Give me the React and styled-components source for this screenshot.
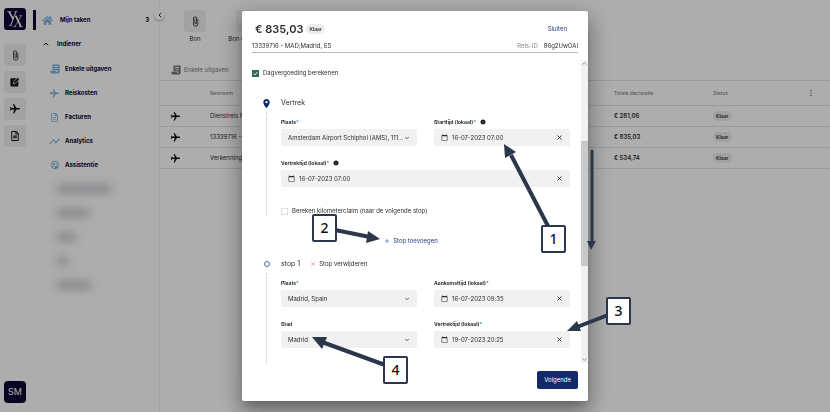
import React from 'react';
import styled, { createGlobalStyle } from 'styled-components';
import { FaHome, FaRegFileAlt } from 'react-icons/fa';
import {
  MdAttachFile,
  MdCalendarToday,
  MdFlight,
  MdInfo,
  MdLocationOn,
  MdMoreVert,
  MdOutlineSupervisedUserCircle,
  MdTimeline,
} from 'react-icons/md';
import { ChevronDown, ChevronLeft, ChevronUp, Plus, X } from 'lucide-react';

const GlobalStyle = createGlobalStyle`
  * { box-sizing: border-box; }
  body {
    margin: 0;
    background: #fff;
    color: #2c2c2c;
    font-family: Inter, 'Liberation Sans', sans-serif;
    font-size: 6px;
    line-height: 10px;
  }
  button, input, select { font: inherit; color: inherit; }
  button { padding: 0; border: 0; background: none; cursor: pointer; }
  a { color: inherit; text-decoration: none; }
  svg { display: block; flex: none; }
`;

const Page = styled.div`
  display: flex;
  min-height: 100vh;
`;

// --- Left rail ---

const Rail = styled.nav`
  display: flex;
  flex-direction: column;
  align-items: center;
  gap: 5px;
  width: 33px;
  padding: 8px 7px 9px 4px;
`;

const Logo = styled.a`
  margin-bottom: 9px;
`;

const Tile = styled.button`
  display: flex;
  align-items: center;
  justify-content: center;
  width: 22px;
  height: 22px;
  border-radius: 4px;
  background: #efefef;
  color: #111;
`;

const Avatar = styled(Tile)`
  margin-top: auto;
  background: #0b0736;
  color: #fff;
  font-size: 9px;
`;

// --- Sidebar ---

const Sidebar = styled.aside`
  position: relative;
  width: 127px;
  padding: 8px 0;
  border-right: 1px solid #f4f4f4;
`;

const NavLink = styled.a`
  display: flex;
  align-items: center;
  gap: ${({ $sub }) => ($sub ? '5px' : '7px')};
  height: 24px;
  padding: 0 10px 0 ${({ $sub }) => ($sub ? '16px' : '9px')};
  background: ${({ $active }) =>
    $active ? 'linear-gradient(#0b0736, #0b0736) left center / 3px 20px no-repeat' : 'none'};
  color: #0b0736;
  font-weight: 700;
`;

const NavIcon = styled.span`
  display: flex;
  justify-content: center;
  width: 11px;
  color: #7db4dc;
`;

const Count = styled.span`
  margin-left: auto;
`;

const SubNav = styled.div`
  padding-top: 1px;
`;

const Blurred = styled.div`
  display: flex;
  flex-direction: column;
  gap: 16px;
  padding: 8px 0 0 24px;
  filter: blur(5px);
`;

const BlurredLine = styled.span`
  width: ${({ $width }) => $width};
  height: 8px;
  background: #c2c2c8;
`;

const Collapse = styled.button`
  position: absolute;
  top: 9px;
  right: -6px;
  display: flex;
  align-items: center;
  justify-content: center;
  width: 11px;
  height: 11px;
  border-radius: 50%;
  background: #fff;
  box-shadow: 0 1px 2px rgba(0, 0, 0, 0.3);
`;

// --- Overview behind the dialog ---

const Main = styled.main`
  flex: 1;
  min-width: 0;
`;

const Toolbar = styled.div`
  display: flex;
  gap: 12px;
  padding: 10px 15px 0;
`;

const Action = styled.div`
  display: flex;
  flex-direction: column;
  align-items: center;
  gap: 2px;
  width: 40px;
  white-space: nowrap;
`;

const Tab = styled.button`
  display: flex;
  align-items: center;
  gap: 3px;
  margin: 21px 0 5px 11px;
  color: #777;
`;

const Table = styled.table`
  width: 100%;
  table-layout: fixed;
  border-collapse: collapse;
  border-top: 1px solid #e2e2e2;
  text-align: left;

  th, td {
    height: 21px;
    padding: 0;
    border-bottom: 1px solid #e2e2e2;
    white-space: nowrap;
  }
  th {
    height: 25px;
    color: #777;
    font-size: 5px;
    font-weight: 400;
  }
`;

const Amount = styled.span`
  font-weight: 600;
`;

const Plane = styled(MdFlight)`
  transform: rotate(90deg);
`;

const IconCell = styled.td`
  svg { margin-left: 10px; color: #111; }
`;

const Badge = styled.span`
  display: inline-block;
  padding: 0 3px;
  border-radius: 5px;
  background: #ededed;
  color: #333;
  font-size: 5px;
  font-weight: 600;
`;

// --- Dialog ---

const Overlay = styled.div`
  position: fixed;
  inset: 0;
  display: flex;
  justify-content: center;
  align-items: flex-start;
  padding: 11px 16px;
  background: rgba(0, 0, 0, 0.32);
`;

const Dialog = styled.section`
  position: relative;
  display: flex;
  flex-direction: column;
  width: 100%;
  max-width: 346px;
  max-height: calc(100vh - 22px);
  border-radius: 2px;
  background: #fff;
  box-shadow: 0 6px 8px -3px rgba(0, 0, 0, 0.2), 0 12px 20px 2px rgba(0, 0, 0, 0.2),
    0 5px 24px 4px rgba(0, 0, 0, 0.18);
`;

const DialogHeader = styled.header`
  margin: 0 10px;
  padding-top: 10px;
  border-bottom: 1px solid #b8b8b8;
`;

const HeaderRow = styled.div`
  display: flex;
  align-items: center;
  gap: 3px;
  padding: 0 11px 0 3px;
`;

const Total = styled.h1`
  margin: 0;
  font-size: 11px;
  font-weight: 600;
  line-height: 16px;
`;

const TextButton = styled.button`
  display: flex;
  align-items: center;
  gap: 3px;
  color: ${({ $plain }) => ($plain ? 'inherit' : '#1f3a7d')};
`;

const CloseLink = styled(TextButton)`
  margin-left: auto;
`;

const TripRow = styled.div`
  display: flex;
  gap: 6px;
  padding: 4px 0 1px;
`;

const TripId = styled.span`
  margin-left: auto;
  color: #888;
`;

const DialogBody = styled.div`
  display: flex;
  min-height: 0;
  margin-top: 7px;
`;

const Form = styled.form`
  flex: 1;
  min-width: 0;
  padding: 8px 11px 0 10px;
`;

const Check = styled.label`
  display: flex;
  align-items: center;
  gap: 4px;
  width: fit-content;

  input {
    appearance: none;
    width: 7px;
    height: 7px;
    margin: 0;
    border: 1px solid #ddd;
    background: #fff;
  }
  input:checked {
    border-color: #2f6b58;
    background: #2f6b58 url("data:image/svg+xml,%3Csvg xmlns='http://www.w3.org/2000/svg' viewBox='0 0 10 10'%3E%3Cpath d='M1 5l3 3 5-6' fill='none' stroke='white' stroke-width='1.6'/%3E%3C/svg%3E");
  }
`;

const LegOption = styled.div`
  padding-top: 4px;
`;

const Stop = styled.div`
  display: grid;
  grid-template-columns: 9px minmax(0, 1fr);
  column-gap: 10px;
  padding-left: 10px;
  margin-top: ${({ $first }) => ($first ? '20px' : '13px')};
`;

const Track = styled.div`
  display: flex;
  flex-direction: column;
  align-items: center;
  gap: 4px;
  color: #12296b;

  &::after {
    content: '';
    flex: 1;
    border-left: 1px dotted #ccc;
  }
`;

const Marker = styled.span`
  display: flex;
  align-items: center;
  justify-content: center;
  height: 10px;
`;

const Ring = styled.span`
  width: 6px;
  height: 6px;
  border: 1px solid #5468a0;
  border-radius: 50%;
`;

const StopHeader = styled.div`
  display: flex;
  align-items: center;
  gap: 10px;
`;

const StopTitle = styled.h2`
  margin: 0;
  font-size: 7px;
  font-weight: 400;
`;

const Fields = styled.div`
  display: grid;
  grid-template-columns: 1fr 1fr;
  gap: 12px 17px;
  padding: 9px 0 15px;
`;

const FieldBox = styled.div`
  grid-column: ${({ $wide }) => ($wide ? '1 / -1' : 'auto')};
  min-width: 0;
`;

const Label = styled.label`
  display: flex;
  align-items: center;
  margin-bottom: 2px;
  font-size: 5px;
  font-weight: 700;
  svg { margin-left: 4px; color: #111; }
`;

const Required = styled.span`
  color: #2a8ad4;
`;

const Control = styled.div`
  display: flex;
  align-items: center;
  gap: ${({ $tight }) => ($tight ? '0' : '4px')};
  height: 17px;
  padding: 0 7px;
  border-radius: 2px;
  background: #f1f1f1;

  input, select {
    flex: 1;
    min-width: 0;
    height: 100%;
    padding: 0;
    border: 0;
    outline: 0;
    background: none;
    appearance: none;
  }
`;

const AddRow = styled.div`
  display: flex;
  justify-content: center;
  padding: 20px 0 0;
`;

const Scrollbar = styled.div`
  display: flex;
  flex-direction: column;
  justify-content: space-between;
  align-items: center;
  width: 7px;
  background: #f1f1f1;
  color: #555;
`;

const Thumb = styled.div`
  width: 100%;
  height: 41%;
  margin-bottom: 16px;
  background: #c9c9c9;
`;

const DialogFooter = styled.footer`
  display: flex;
  justify-content: flex-end;
  padding: 8px 10px 12px;
`;

const Primary = styled.button`
  height: 18px;
  padding: 0 7px;
  border-radius: 2px;
  background: #12296b;
  color: #fff;
`;

// --- Numbered callouts that point into the dialog ---

const Arrows = styled.svg`
  position: absolute;
  top: 0;
  left: 0;
  width: 346px;
  height: 389px;
  overflow: visible;
  pointer-events: none;
  color: #2b384c;
`;

const Callout = styled.div`
  position: absolute;
  top: ${({ $top }) => $top}px;
  left: ${({ $left }) => $left}px;
  width: 25px;
  height: 28px;
  border: 2px solid #2b384c;
  border-radius: 2px;
  background: #fff;
  color: #111;
  font-family: 'Noto Sans', sans-serif;
  font-size: 14px;
  font-weight: 500;
  line-height: 24px;
  text-align: center;
`;

const LogoMark = () => (
  <svg width="22" height="22" viewBox="0 0 66 66" fill="none" stroke="#fff">
    <rect width="66" height="66" rx="10" fill="#0b0736" stroke="none" />
    <path d="M15 11L28 34" strokeWidth="5" />
    <path d="M36 11L20 52" strokeWidth="3" />
    <path d="M10 11h12M31 11h10M15 53h10" strokeWidth="2" />
    <path d="M35 23L51 56" strokeWidth="5" />
    <path d="M51 24L33 55" strokeWidth="2" />
    <path d="M46 23h9M45 56h11M28 56h9" strokeWidth="2" />
  </svg>
);

const ReceiptIcon = ({ size = 10 }) => (
  <svg width={size} height={size} viewBox="0 0 24 24" fill="currentColor">
    <path fillRule="evenodd" d="M6 1h17v18a4 4 0 0 1-4 4H5a4 4 0 0 1-4-4v-3h14v3a2 2 0 0 0 3 0v-4H6V1zm4 4v2h9V5h-9zm0 5v2h9v-2h-9z" />
  </svg>
);

const EditIcon = ({ size = 10 }) => (
  <svg width={size} height={size} viewBox="0 0 24 24">
    <rect x="1" y="3" width="19" height="20" rx="2" fill="currentColor" />
    <path d="M8 16v-4L19 1l4 4-11 11z" fill="currentColor" stroke="#efefef" strokeWidth="2" />
  </svg>
);

const sideItems = [
  { label: 'Enkele uitgaven', icon: <ReceiptIcon /> },
  { label: 'Reiskosten', icon: <Plane size={11} /> },
  { label: 'Facturen', icon: <FaRegFileAlt size={9} /> },
  { label: 'Analytics', icon: <MdTimeline size={11} /> },
  { label: 'Assistentie', icon: <MdOutlineSupervisedUserCircle size={10} /> },
];

const trips = [
  { name: 'Dienstreis Parijs', total: '€ 281,06' },
  { name: '13339716 - MAD;Madrid, ES', total: '€ 835,03' },
  { name: 'Verkenning', total: '€ 534,74' },
];

const callouts = [
  { number: 1, left: 299, top: 214 },
  { number: 2, left: 70, top: 203 },
  { number: 3, left: 364, top: 286 },
  { number: 4, left: 141, top: 345 },
];

const FieldLabel = ({ id, text, required, info }) => (
  <Label htmlFor={id}>
    {text}
    {required && <Required>*</Required>}
    {info && <MdInfo size={6} />}
  </Label>
);

const SelectField = ({ id, label, value, required }) => (
  <FieldBox>
    <FieldLabel id={id} text={label} required={required} />
    <Control $tight>
      <select id={id} defaultValue={value}>
        <option>{value}</option>
      </select>
      <ChevronDown size={6} strokeWidth={3} />
    </Control>
  </FieldBox>
);

const DateField = ({ id, label, value, info, wide }) => (
  <FieldBox $wide={wide}>
    <FieldLabel id={id} text={label} required info={info} />
    <Control>
      <MdCalendarToday size={7} />
      <input id={id} type="text" defaultValue={value} />
      <button type="button" aria-label="Wissen"><X size={7} strokeWidth={3} /></button>
    </Control>
  </FieldBox>
);

const App = () => (
  <>
    <GlobalStyle />
    <Page>
      <Rail>
        <Logo href="#" aria-label="Home"><LogoMark /></Logo>
        <Tile aria-label="Bon"><MdAttachFile size={11} /></Tile>
        <Tile aria-label="Bewerken"><EditIcon /></Tile>
        <Tile aria-label="Reis"><Plane size={12} /></Tile>
        <Tile aria-label="Factuur"><FaRegFileAlt size={10} /></Tile>
        <Avatar>SM</Avatar>
      </Rail>

      <Sidebar>
        <NavLink href="#" $active>
          <NavIcon><FaHome size={11} /></NavIcon>
          Mijn taken
          <Count>3</Count>
        </NavLink>
        <NavLink href="#">
          <ChevronUp size={8} strokeWidth={3} />
          Indiener
        </NavLink>
        <SubNav>
          {sideItems.map(({ label, icon }) => (
            <NavLink key={label} href="#" $sub>
              <NavIcon>{icon}</NavIcon>
              {label}
            </NavLink>
          ))}
        </SubNav>
        <Blurred>
          <BlurredLine $width="54px" />
          <BlurredLine $width="32px" />
          <BlurredLine $width="19px" />
          <BlurredLine $width="11px" />
          <BlurredLine $width="34px" />
        </Blurred>
        <Collapse aria-label="Inklappen"><ChevronLeft size={8} strokeWidth={3} /></Collapse>
      </Sidebar>

      <Main>
        <Toolbar>
          <Action>
            <Tile aria-label="Bon"><MdAttachFile size={11} /></Tile>
            Bon
          </Action>
          <Action>
            <Tile aria-label="Bon overige"><MdAttachFile size={11} /></Tile>
            Bon overigen
          </Action>
        </Toolbar>
        <Tab><ReceiptIcon />Enkele uitgaven</Tab>
        <Table>
          <colgroup>
            <col style={{ width: 50 }} />
            <col />
            <col style={{ width: 99 }} />
            <col style={{ width: 93 }} />
            <col style={{ width: 24 }} />
          </colgroup>
          <thead>
            <tr>
              <th />
              <th>Reisnaam</th>
              <th>Totale declaratie</th>
              <th>Status</th>
              <th><MdMoreVert size={10} /></th>
            </tr>
          </thead>
          <tbody>
            {trips.map(({ name, total }) => (
              <tr key={name}>
                <IconCell><Plane size={11} /></IconCell>
                <td>{name}</td>
                <td><Amount>{total}</Amount></td>
                <td><Badge>Klaar</Badge></td>
                <td />
              </tr>
            ))}
          </tbody>
        </Table>
      </Main>
    </Page>

    <Overlay>
      <Dialog role="dialog" aria-label="Reis">
        <DialogHeader>
          <HeaderRow>
            <Total>€ 835,03</Total>
            <Badge>Klaar</Badge>
            <CloseLink>Sluiten</CloseLink>
          </HeaderRow>
          <TripRow>
            <span>13339716 - MAD;Madrid, ES</span>
            <TripId>Reis-ID</TripId>
            <span>86g2UwOAI</span>
          </TripRow>
        </DialogHeader>

        <DialogBody>
          <Form>
            <Check>
              <input type="checkbox" defaultChecked />
              Dagvergoeding berekenen
            </Check>

            <Stop $first>
              <Track><Marker><MdLocationOn size={11} /></Marker></Track>
              <div>
                <StopTitle>Vertrek</StopTitle>
                <Fields>
                  <SelectField id="from" label="Plaats" required value="Amsterdam Airport Schiphol (AMS), 111..." />
                  <DateField id="start" label="Starttijd (lokaal)" info value="16-07-2023 07:00" />
                  <DateField id="depart" label="Vertrektijd (lokaal)" info wide value="16-07-2023 07:00" />
                </Fields>
                <LegOption>
                  <Check>
                    <input type="checkbox" />
                    Bereken kilometerclaim (naar de volgende stop)
                  </Check>
                </LegOption>
              </div>
            </Stop>

            <AddRow>
              <TextButton type="button"><Plus size={6} />Stop toevoegen</TextButton>
            </AddRow>

            <Stop>
              <Track><Marker><Ring /></Marker></Track>
              <div>
                <StopHeader>
                  <StopTitle>stop 1</StopTitle>
                  <TextButton type="button" $plain><X size={6} color="#e5533d" />Stop verwijderen</TextButton>
                </StopHeader>
                <Fields>
                  <SelectField id="place" label="Plaats" required value="Madrid, Spain" />
                  <DateField id="arrival" label="Aankomsttijd (lokaal)" value="16-07-2023 09:35" />
                  <SelectField id="city" label="Stad" value="Madrid" />
                  <DateField id="leave" label="Vertrektijd (lokaal)" value="19-07-2023 20:25" />
                </Fields>
              </div>
            </Stop>
          </Form>
          <Scrollbar>
            <ChevronUp size={7} />
            <Thumb />
            <ChevronDown size={7} />
          </Scrollbar>
        </DialogBody>

        <DialogFooter>
          <Primary>Volgende</Primary>
        </DialogFooter>

        <Arrows viewBox="242 11 346 389" stroke="currentColor" fill="currentColor" aria-hidden="true">
          <path d="M511 155L549 228" strokeWidth="4" />
          <path d="M504 144L516 152L505 158z" stroke="none" />
          <path d="M335 230L370 237" strokeWidth="4" />
          <path d="M380 239L368 231L366 243z" stroke="none" />
          <path d="M608 315L577 327" strokeWidth="4" />
          <path d="M567 331L577 321L581 331z" stroke="none" />
          <path d="M385 365L322 342" strokeWidth="4" />
          <path d="M312 337L327 337L322 349z" stroke="none" />
          <path d="M592 151V243" strokeWidth="3" strokeLinecap="round" />
          <path d="M587 241H596L591 250z" stroke="none" />
        </Arrows>
        {callouts.map(({ number, left, top }) => (
          <Callout key={number} $left={left} $top={top}>{number}</Callout>
        ))}
      </Dialog>
    </Overlay>
  </>
);

export default App;
